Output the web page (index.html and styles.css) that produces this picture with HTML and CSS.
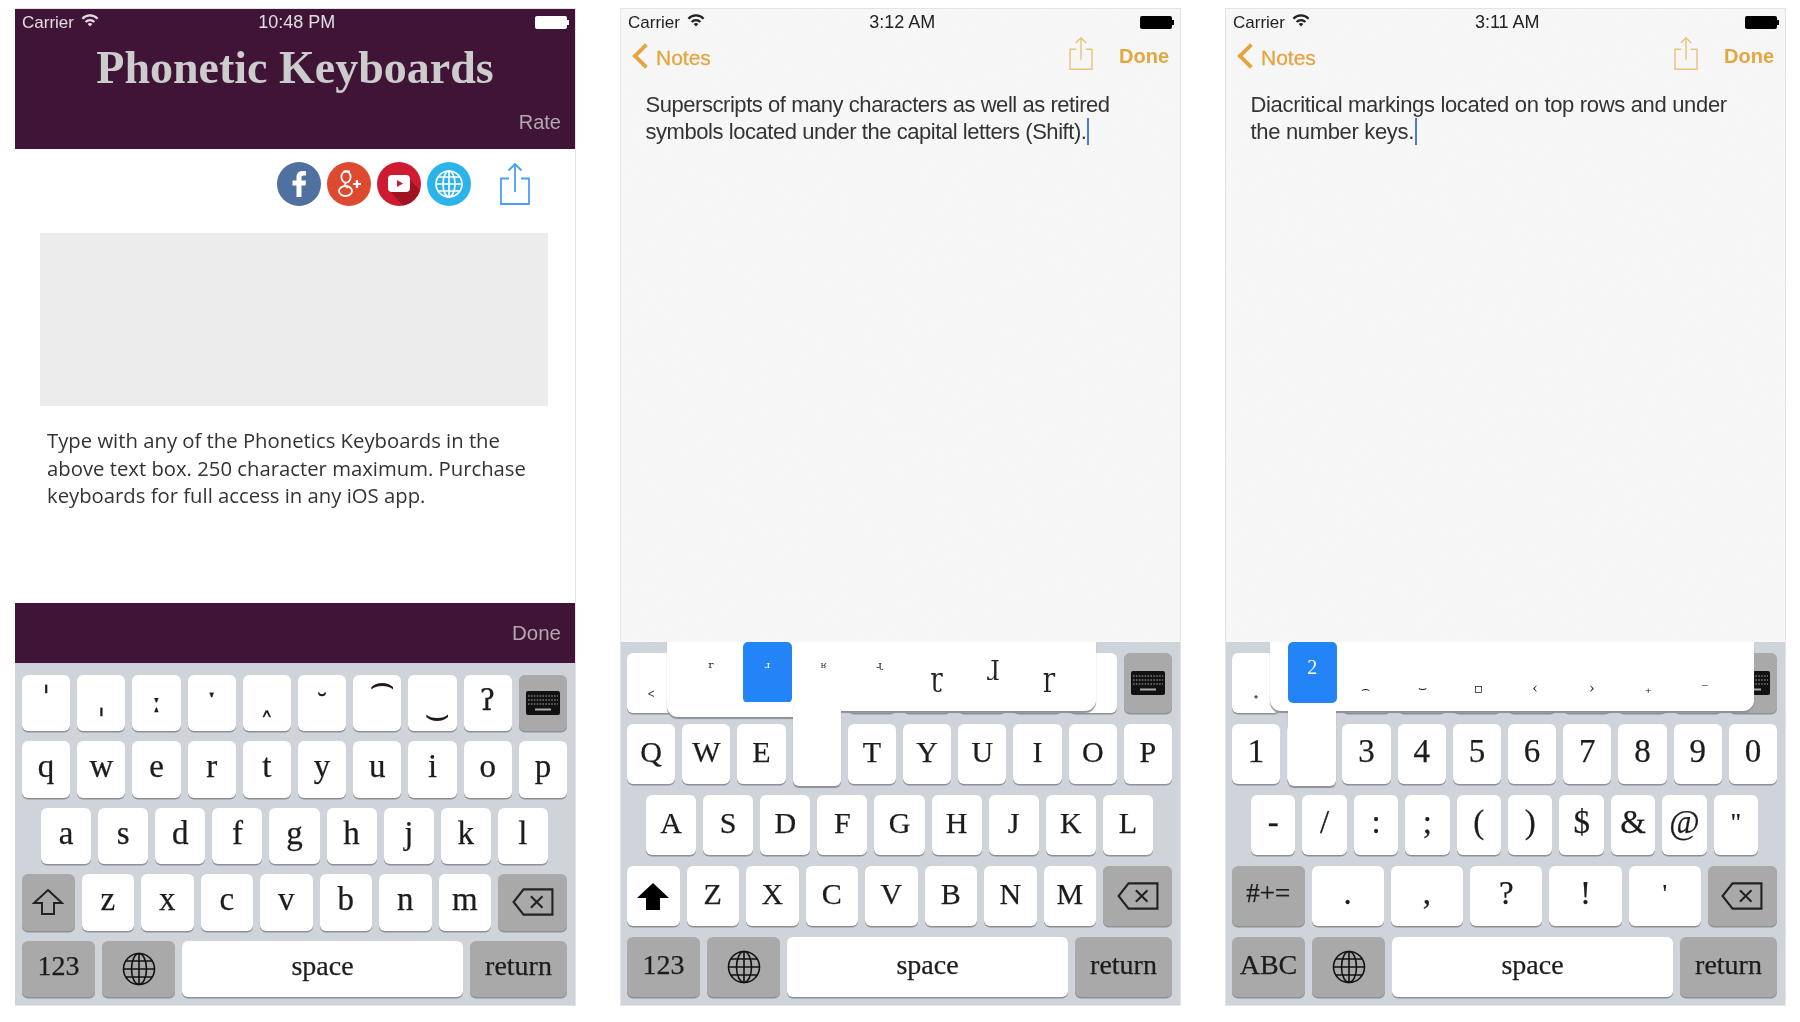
FILE: index.html
```html
<!DOCTYPE html>
<html lang="en">
<head>
<meta charset="utf-8">
<title>Phonetic Keyboards</title>
<link rel="stylesheet" href="styles.css">
</head>
<body>
<svg class="defs" width="0" height="0" aria-hidden="true">
  <filter id="paper-grain"><feTurbulence type="fractalNoise" baseFrequency="0.55" numOctaves="2" seed="4"/><feColorMatrix values="0 0 0 0 0.4  0 0 0 0 0.4  0 0 0 0 0.4  0.5 0 0 0 -0.2"/></filter>
  <symbol id="wifi" viewBox="0 0 18 14"><path d="M0.6 5 A11.5 11.5 0 0 1 17.4 5 L15.8 6.6 A9.2 9.2 0 0 0 2.2 6.6Z M3.8 8.2 A7 7 0 0 1 14.2 8.2 L12.6 9.8 A5 5 0 0 0 5.4 9.8Z M6.7 11 A3 3 0 0 1 11.3 11 L9 13.6Z" fill="currentColor"/></symbol>
  <symbol id="share" viewBox="0 0 30 42"><path d="M9 15.5H1V41H29V15.5H21 M15 1V29 M8.5 7.5L15 1L21.5 7.5" fill="none" stroke="currentColor" stroke-width="1.8"/></symbol>
  <symbol id="globe" viewBox="0 0 34 34"><g fill="none" stroke="#111" stroke-width="1.6"><circle cx="17" cy="17" r="15.5"/><ellipse cx="17" cy="17" rx="7.5" ry="15.5"/><path d="M17 1.5V32.5M1.5 17H32.5M4 9H30M4 25H30"/></g></symbol>
  <symbol id="back" viewBox="0 0 40 26"><path d="M11 1H38.5V25H11L1.5 13Z M18 7.5L29 18.5 M29 7.5L18 18.5" fill="none" stroke="#222" stroke-width="2"/></symbol>
  <symbol id="shift" viewBox="0 0 32 28"><path d="M16 2L30 15H22V26H10V15H2Z" fill="none" stroke="#222" stroke-width="2"/></symbol>
  <symbol id="shiftf" viewBox="0 0 32 28"><path d="M16 1L32 16H23V28H9V16H0Z" fill="#000"/></symbol>
  <symbol id="kbd" viewBox="0 0 34 24"><rect width="34" height="24" rx="2" fill="#111"/><g stroke="#aaa" stroke-width="1" stroke-dasharray="1.6 1.3"><path d="M2 5H32M2 9H32M2 13H32"/></g><path d="M9 18.5H25" stroke="#aaa" stroke-width="2"/></symbol>
</svg>

<section class="phone">
  <header class="brand">
    <div class="status status-light">
      <span class="carrier">Carrier <svg class="wifi"><use href="#wifi"/></svg></span>
      <span class="time">10:48 PM</span>
      <span class="battery battery-white"></span>
    </div>
    <h1 class="title">Phonetic Keyboards</h1>
    <div class="rate">Rate</div>
  </header>
  <div class="socials">
    <svg class="social" viewBox="0 0 44 44"><circle cx="22" cy="22" r="22" fill="#50719f"/><path d="M24.5 35V23.5H28.5L29 18.5H24.5V15.8C24.5 14.4 25 13.6 26.8 13.6H29V9.2C28.4 9.1 27 9 25.5 9C22 9 19.5 11.2 19.5 15.2V18.5H15.5V23.5H19.5V35Z" fill="#fff"/></svg>
    <svg class="social" viewBox="0 0 44 44"><circle cx="22" cy="22" r="22" fill="#de4a30"/><g fill="none" stroke="#fff" stroke-width="1.8"><ellipse cx="19" cy="15" rx="4.6" ry="5.6"/><ellipse cx="18.5" cy="29" rx="6.5" ry="5"/><path d="M23 9.5H16.5M19 21C16.5 23 19 24 21 26"/></g><path d="M30 18V26M26 22H34" stroke="#fff" stroke-width="2.2"/></svg>
    <svg class="social" viewBox="0 0 44 44"><circle cx="22" cy="22" r="22" fill="#cf1b32"/><path d="M11 27L30 15L43 28A22 22 0 0 1 26 43.6Z" fill="#a01122"/><rect x="11" y="13" width="22" height="17" rx="4" fill="#fff"/><path d="M20 18L26 21.5L20 25Z" fill="#cf1b32"/></svg>
    <svg class="social" viewBox="0 0 44 44"><circle cx="22" cy="22" r="22" fill="#2cb3ea"/><g fill="none" stroke="#fff" stroke-width="1.7"><circle cx="22" cy="22" r="13"/><ellipse cx="22" cy="22" rx="6" ry="13"/><path d="M22 9V35M9 22H35M11 15H33M11 29H33"/></g></svg>
    <svg class="share-blue"><use href="#share"/></svg>
  </div>
  <div class="textbox"></div>
  <p class="blurb">Type with any of the Phonetics Keyboards in the above text box. 250 character maximum. Purchase keyboards for full access in any iOS app.</p>
  <div class="donebar">Done</div>
  <div class="kb kb-short">
    <div class="row">
      <div class="key ipa g-tick-top">ˈ</div>
      <div class="key ipa g-tick-low">ˌ</div>
      <div class="key ipa g-mid">ː</div>
      <div class="key ipa g-high">ˑ</div>
      <div class="key ipa g-low">˰</div>
      <div class="key ipa g-breve">˘</div>
      <div class="key ipa g-tie-top">⌢</div>
      <div class="key ipa g-tie-low">⌣</div>
      <div class="key ipa g-q">ʔ</div>
      <div class="key dark"><svg class="i-kbd"><use href="#kbd"/></svg></div>
    </div>
    <div class="row"><div class="key">q</div><div class="key">w</div><div class="key">e</div><div class="key">r</div><div class="key">t</div><div class="key">y</div><div class="key">u</div><div class="key">i</div><div class="key">o</div><div class="key">p</div></div>
    <div class="row inset"><div class="key">a</div><div class="key">s</div><div class="key">d</div><div class="key">f</div><div class="key">g</div><div class="key">h</div><div class="key">j</div><div class="key">k</div><div class="key">l</div></div>
    <div class="row">
      <div class="key dark k-shift"><svg class="i-shift"><use href="#shift"/></svg></div>
      <div class="key">z</div><div class="key">x</div><div class="key">c</div><div class="key">v</div><div class="key">b</div><div class="key">n</div><div class="key">m</div>
      <div class="key dark k-back"><svg class="i-back"><use href="#back"/></svg></div>
    </div>
    <div class="row bottom">
      <div class="key dark k-mode">123</div>
      <div class="key dark k-mode"><svg class="i-globe"><use href="#globe"/></svg></div>
      <div class="key">space</div>
      <div class="key dark k-return">return</div>
    </div>
  </div>
</section>

<section class="phone paper">
  <svg class="grain" aria-hidden="true"><rect width="100%" height="100%" filter="url(#paper-grain)"/></svg>
  <div class="status">
    <span class="carrier">Carrier <svg class="wifi"><use href="#wifi"/></svg></span>
    <span class="time">3:12 AM</span>
    <span class="battery"></span>
  </div>
  <nav class="notesbar">
    <span class="chevron"></span>
    <span class="notes">Notes</span>
    <svg class="share-gold"><use href="#share"/></svg>
    <span class="done">Done</span>
  </nav>
  <p class="note">Superscripts of many characters as well as retired<br>symbols located under the capital letters (Shift).<span class="caret"></span></p>
  <div class="kb kb-tall">
    <div class="row">
      <div class="key tiny">˂</div><div class="key"></div><div class="key"></div><div class="key"></div><div class="key"></div><div class="key"></div><div class="key"></div><div class="key"></div><div class="key"></div>
      <div class="key dark"><svg class="i-kbd"><use href="#kbd"/></svg></div>
    </div>
    <div class="row caps"><div class="key">Q</div><div class="key">W</div><div class="key">E</div><div class="key"></div><div class="key">T</div><div class="key">Y</div><div class="key">U</div><div class="key">I</div><div class="key">O</div><div class="key">P</div></div>
    <div class="row inset caps"><div class="key">A</div><div class="key">S</div><div class="key">D</div><div class="key">F</div><div class="key">G</div><div class="key">H</div><div class="key">J</div><div class="key">K</div><div class="key">L</div></div>
    <div class="row caps">
      <div class="key k-shift"><svg class="i-shift"><use href="#shiftf"/></svg></div>
      <div class="key">Z</div><div class="key">X</div><div class="key">C</div><div class="key">V</div><div class="key">B</div><div class="key">N</div><div class="key">M</div>
      <div class="key dark k-back"><svg class="i-back"><use href="#back"/></svg></div>
    </div>
    <div class="row bottom">
      <div class="key dark k-mode">123</div>
      <div class="key dark k-mode"><svg class="i-globe"><use href="#globe"/></svg></div>
      <div class="key">space</div>
      <div class="key dark k-return">return</div>
    </div>
    <div class="pop pop-r">
      <div class="pop-body">
        <span class="cell c-s">ʳ</span><span class="cell sel c-s">ʴ</span><span class="cell c-s">ʶ</span><span class="cell c-s">ʵ</span><span class="cell c-l">ɽ</span><span class="cell c-l c-up">ɺ</span><span class="cell c-l">ɼ</span>
      </div>
      <div class="pop-left"></div>
      <div class="pop-stem"></div>
    </div>
  </div>
</section>

<section class="phone paper">
  <svg class="grain" aria-hidden="true"><rect width="100%" height="100%" filter="url(#paper-grain)"/></svg>
  <div class="status">
    <span class="carrier">Carrier <svg class="wifi"><use href="#wifi"/></svg></span>
    <span class="time">3:11 AM</span>
    <span class="battery"></span>
  </div>
  <nav class="notesbar">
    <span class="chevron"></span>
    <span class="notes">Notes</span>
    <svg class="share-gold"><use href="#share"/></svg>
    <span class="done">Done</span>
  </nav>
  <p class="note note-wide">Diacritical markings located on top rows and under<br>the number keys.<span class="caret"></span></p>
  <div class="kb kb-tall">
    <div class="row">
      <div class="key tiny">₊</div><div class="key"></div><div class="key"></div><div class="key"></div><div class="key"></div><div class="key"></div><div class="key"></div><div class="key"></div><div class="key"></div>
      <div class="key dark"><svg class="i-kbd"><use href="#kbd"/></svg></div>
    </div>
    <div class="row"><div class="key">1</div><div class="key"></div><div class="key">3</div><div class="key">4</div><div class="key">5</div><div class="key">6</div><div class="key">7</div><div class="key">8</div><div class="key">9</div><div class="key">0</div></div>
    <div class="row inset"><div class="key">-</div><div class="key">/</div><div class="key">:</div><div class="key">;</div><div class="key">(</div><div class="key">)</div><div class="key">$</div><div class="key">&amp;</div><div class="key">@</div><div class="key k-quote">"</div></div>
    <div class="row">
      <div class="key dark k-sym">#+=</div>
      <div class="key">.</div><div class="key">,</div><div class="key">?</div><div class="key">!</div><div class="key k-quote">'</div>
      <div class="key dark k-back"><svg class="i-back"><use href="#back"/></svg></div>
    </div>
    <div class="row bottom">
      <div class="key dark k-mode">ABC</div>
      <div class="key dark k-mode"><svg class="i-globe"><use href="#globe"/></svg></div>
      <div class="key">space</div>
      <div class="key dark k-return">return</div>
    </div>
    <div class="pop pop-n">
      <div class="pop-body">
        <span class="cell sel c-two">2</span><span class="cell c-sub">⌢</span><span class="cell c-sub">⌣</span><span class="cell c-sub">▫</span><span class="cell c-sub">‹</span><span class="cell c-sub">›</span><span class="cell c-sub">₊</span><span class="cell c-sub c-minus">₋</span>
      </div>
      <div class="pop-stem"></div>
    </div>
  </div>
</section>
</body>
</html>
```

FILE: styles.css
```css
* { box-sizing: border-box; }
html, body { margin: 0; background: #fff; }
body {
  display: flex;
  gap: 44px;
  height: 1022px;
  padding: 8px 14px 16px 15px;
  font-family: "Liberation Sans", Arial, sans-serif;
  overflow: hidden;
}
.defs { position: absolute; }
.phone {
  position: relative;
  flex: 0 0 561px;
  display: flex;
  flex-direction: column;
  border: 1px solid #e4e4e4;
  border-left-width: 0;
  filter: blur(0.55px);
  background: #fff;
}
.paper { border-left-width: 1px; background: #f7f7f7; }
.grain { position: absolute; inset: 0; width: 100%; height: 100%; opacity: 0.12; }

/* status bar */
.status {
  position: relative;
  display: grid;
  grid-template-columns: 1fr auto 1fr;
  align-items: center;
  height: 26px;
  padding: 1px 8px 0 7px;
  color: #222;
  font-size: 17px;
}
.status-light { color: #e2dde0; }
.carrier { display: flex; align-items: center; gap: 7px; }
.wifi { width: 18px; height: 14px; margin-top: -5px; }
.time { padding-left: 4.5px; font-size: 18px; }
.battery {
  justify-self: end;
  position: relative;
  width: 32px;
  height: 13px;
  border-radius: 2px;
  background: #000;
}
.battery::after {
  content: "";
  position: absolute;
  right: -2px;
  top: 4px;
  width: 2px;
  height: 5px;
  background: inherit;
}
.battery-white { background: #fff; }

/* first phone */
.brand {
  height: 140px;
  background: #3f1436;
  display: flex;
  flex-direction: column;
}
.title {
  margin: 5px 0 0;
  text-align: center;
  color: #cdcccd;
  font: bold 46px/56px "Liberation Serif", serif;
}
.rate {
  margin: 14px 14px 0 0;
  text-align: right;
  color: #b3a8b0;
  font-size: 20px;
  line-height: 24px;
}
.socials {
  display: flex;
  align-items: center;
  height: 45px;
  margin-top: 12px;
  padding-left: 262px;
  gap: 6px;
}
.social { width: 44px; height: 44px; }
.share-blue { width: 30px; height: 42px; margin-left: 23px; color: #4a9ef8; }
.textbox {
  flex: none;
  height: 173px;
  margin: 27px 27px 0 25px;
  background: #ececec;
}
.blurb {
  margin: 21px 30px 0 32px;
  color: #333;
  font: 20.3px/27.6px "Open Sans", sans-serif;
}
.donebar {
  margin-top: auto;
  height: 60px;
  padding: 18px 14px 0 0;
  text-align: right;
  color: #b3a8b0;
  background: #3f1436;
  font-size: 20.5px;
  line-height: 24px;
}

/* notes */
.notesbar {
  position: relative;
  display: flex;
  align-items: center;
  height: 42px;
  padding: 0 11px 0 12px;
  color: #e4a640;
}
.chevron {
  width: 18px;
  height: 18px;
  margin-left: 3px;
  border-left: 4px solid #e4a640;
  border-bottom: 4px solid #e4a640;
  transform: rotate(45deg);
}
.notes { margin-left: 2px; font-size: 21px; padding-top: 3px; -webkit-text-stroke: 0.3px #e4a640; }
.share-gold { width: 24px; height: 33px; margin: 0 0 5px auto; color: #eac27c; }
.done { margin-left: 26px; font-size: 20px; font-weight: bold; }
.note {
  position: relative;
  margin: 15px 0 0 24.5px;
  color: #333;
  font-size: 22px;
  line-height: 26px;
  letter-spacing: -0.45px;
  white-space: nowrap;
}
.note-wide { letter-spacing: -0.33px; }
.caret {
  display: inline-block;
  width: 2px;
  height: 27px;
  margin-bottom: -6px;
  margin-left: 1px;
  background: #4f78e6;
}

/* keyboards */
.kb {
  position: relative;
  display: flex;
  flex-direction: column;
  padding-left: 7px;
  padding-right: 8px;
  background: #cfd3da;
  font-family: "Liberation Serif", serif;
  color: #1c1c1c;
}
.kb-short { padding-top: 12px; padding-bottom: 8px; gap: 10px; }
.kb-short .key { height: 56.5px; }
.kb-tall { margin-top: auto; padding-left: 6px; padding-top: 11px; padding-bottom: 8px; gap: 11px; }
.kb-tall .key { height: 60px; }
.row { display: flex; gap: 7px; }
.inset { padding: 0 19px; }
.key {
  flex: 1 1 0;
  display: flex;
  align-items: center;
  justify-content: center;
  min-width: 0;
  padding-bottom: 5px;
  border-radius: 6px;
  background: #fff;
  box-shadow: 0 1.5px 0 #8d9098;
  font-size: 33px;
  -webkit-text-stroke: 0.25px #1c1c1c;
}
.caps .key { font-size: 30px; }
.dark { background: #a9a9a9; }
.k-shift { flex: 0 0 52.5px; }
.k-back { flex: 0 0 69px; }
.k-sym { flex: 0 0 72.5px; font-size: 27px; }
.k-mode { flex: 0 0 73px; }
.k-return { flex: 0 0 97px; }
.bottom .key { font-size: 28px; }
.k-quote { align-items: flex-start; padding-top: 13px; font-size: 26px; }
.tiny {
  align-items: flex-end;
  padding: 0 0 11px;
  font-size: 12px;
}
.i-globe { width: 34px; height: 34px; margin-top: 5px; }
.i-back { width: 42px; height: 28px; margin-top: 5px; }
.i-shift { width: 32px; height: 28px; margin-top: 5px; }
.i-kbd { width: 34px; height: 24px; margin-top: 5px; }

/* IPA marks in first keyboard */
.ipa { flex: 0 0 48.2px; font-family: "DejaVu Serif", serif; padding: 0; line-height: 1; }
.g-tick-top { align-items: flex-start; padding-top: 8px; font-family: "DejaVu Sans", sans-serif; font-size: 30px; }
.g-tick-low { align-items: flex-end; padding-bottom: 14px; font-family: "DejaVu Sans", sans-serif; font-size: 30px; }
.g-mid { font-size: 32px; padding-bottom: 4px; }
.g-high { align-items: flex-start; padding-top: 5px; font-size: 32px; }
.g-low { align-items: flex-end; padding-bottom: 17px; font-size: 26px; }
.g-breve { align-items: flex-start; padding-top: 16px; font-size: 26px; }
.g-tie-top, .g-tie-low {
  padding: 0 0 0 9px;
  font-family: "DejaVu Sans", sans-serif;
  font-size: 40px;
  -webkit-text-stroke: 0;
}
.g-tie-top { align-items: flex-start; line-height: 15px; }
.g-tie-low { align-items: flex-end; line-height: 35px; }
.g-q { font-size: 30px; padding-bottom: 6px; }

/* long press popups */
.pop { position: absolute; top: 0; }
.pop-body {
  position: relative;
  display: flex;
  height: 69px;
  background: #fff;
  border-radius: 0 0 11px 11px;
  box-shadow: 0 1.5px 1px #8d9098;
}
.pop-stem {
  position: absolute;
  top: 60px;
  width: 48px;
  height: 84px;
  background: #fff;
  border-radius: 0 0 6px 6px;
  box-shadow: 0 2px 1px #8d9098;
  clip-path: inset(8px -4px -4px -4px);
}
.pop-left {
  position: absolute;
  top: 40px;
  left: 0;
  height: 35px;
  width: 126px;
  background: #fff;
  border-radius: 0 8px 0 11px;
  box-shadow: 0 1.5px 1px #8d9098;
  clip-path: inset(20px -4px -4px -4px);
}
.pop-r { left: 45.5px; width: 429px; }
.pop-r .pop-body { padding-left: 20.5px; gap: 7.6px; }
.pop-r .pop-stem { left: 126px; }
.pop-n { left: 44px; width: 484px; }
.pop-n .pop-body { padding-left: 18px; gap: 7.9px; }
.pop-n .pop-stem { left: 18px; }
.cell {
  flex: 0 0 48.7px;
  height: 61px;
  display: flex;
  justify-content: center;
  font-family: "DejaVu Serif", serif;
  color: #222;
  line-height: 1;
}
.sel { background: #2384f7; color: #fff; border-radius: 5px; }
.c-s { font-size: 18px; padding-top: 17px; }
.c-l { font-size: 26px; padding-top: 23px; }
.c-up { padding-top: 16px; }
.c-two { margin-right: -3.5px; font: 20px/50px "Liberation Serif", serif; }
.c-sub { font-size: 14px; padding-top: 39px; }
.c-minus { padding-top: 34px; }
```
